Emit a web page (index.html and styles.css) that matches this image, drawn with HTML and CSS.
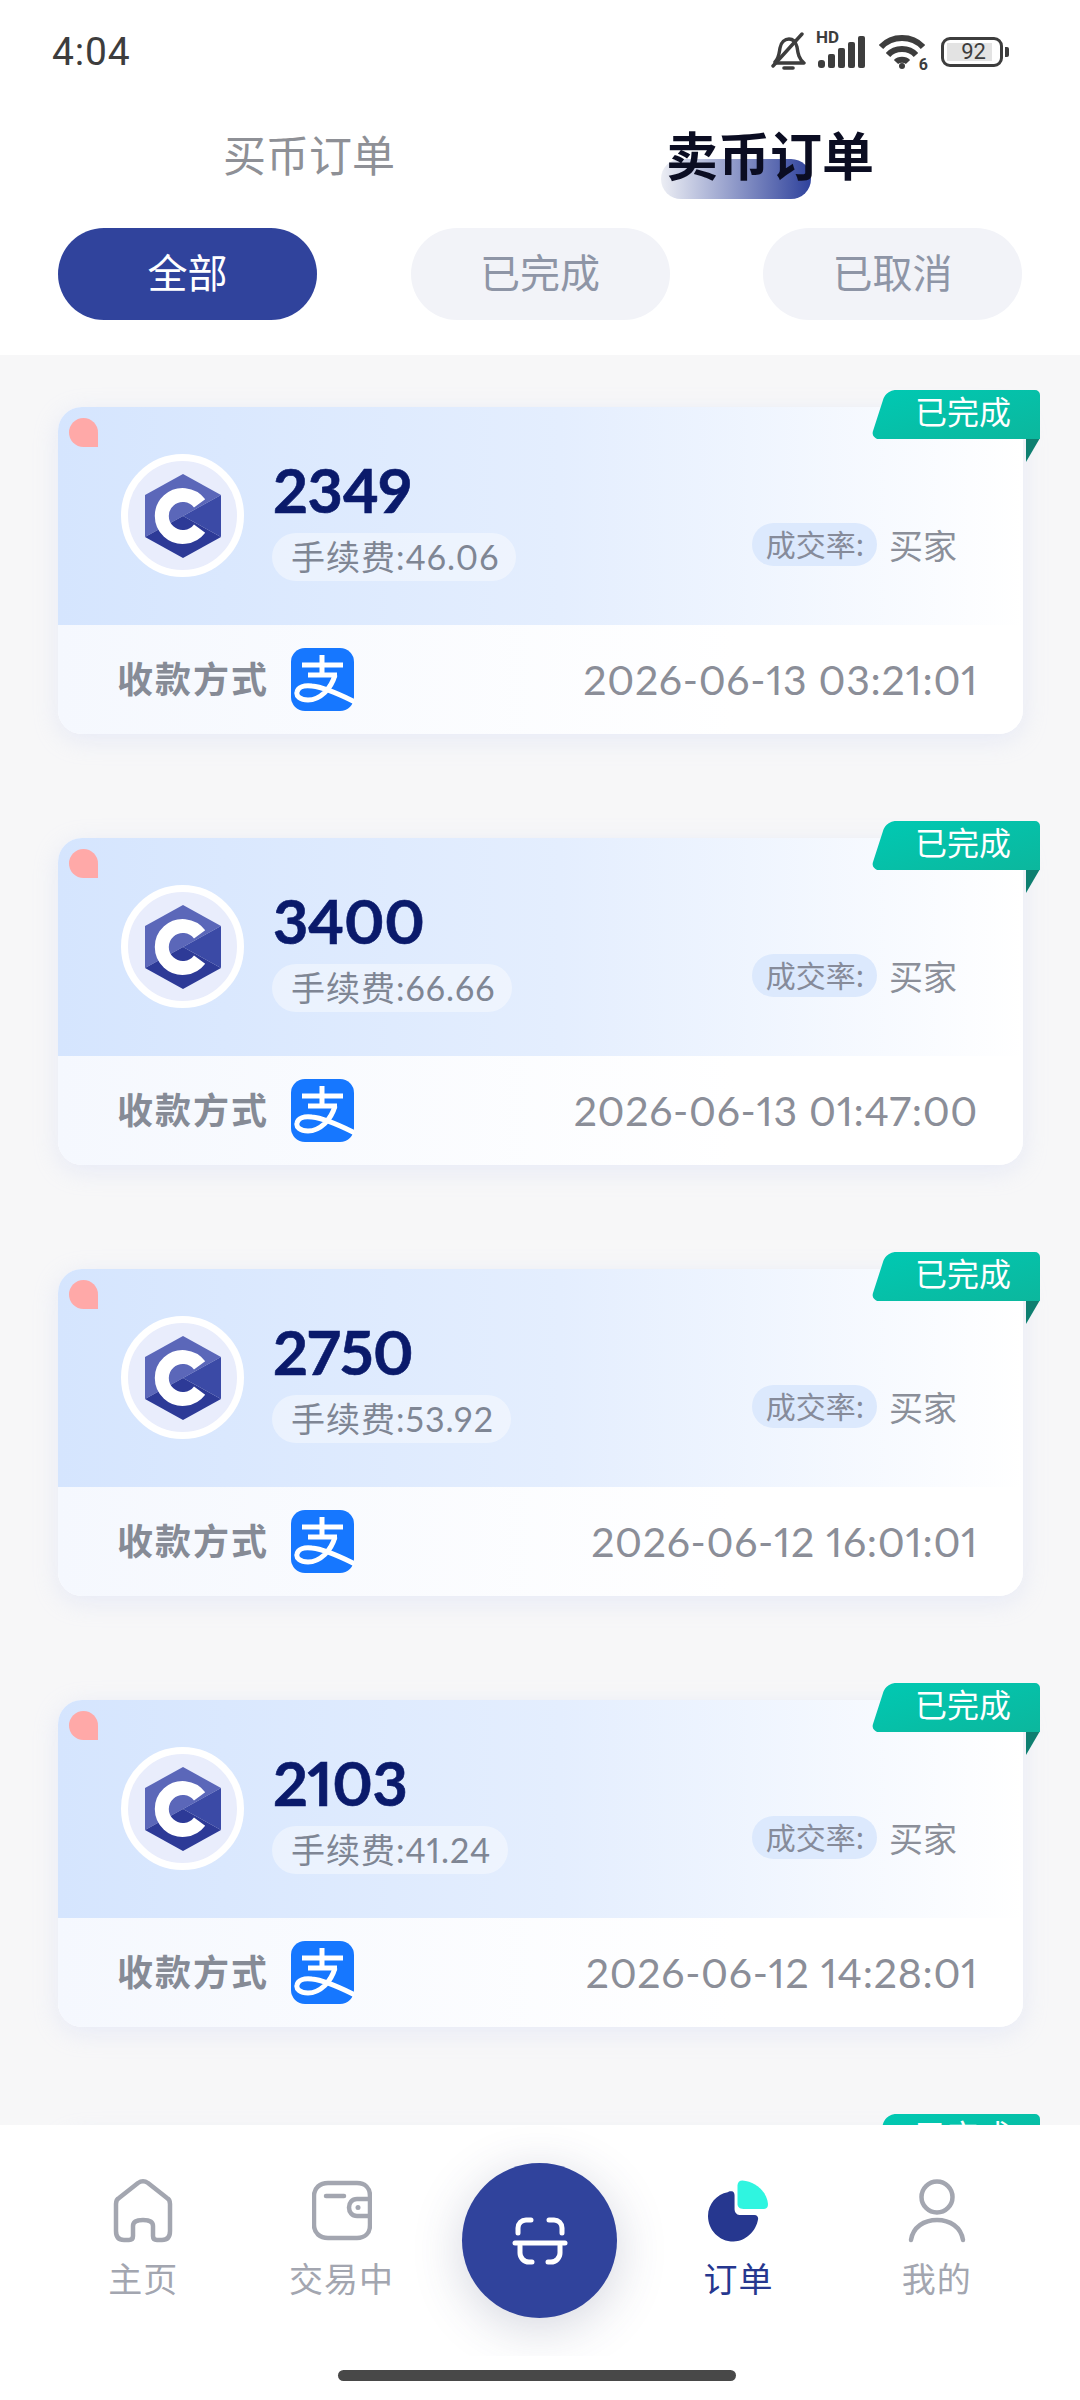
FILE: index.html
```html
<!DOCTYPE html>
<html lang="zh-CN">
<head>
    <meta charset="UTF-8">
    <meta name="viewport" content="width=device-width, initial-scale=1.0">
    <title>卖币订单</title>
    <link rel="stylesheet" href="styles.css">
</head>
<body>
    <svg class="defs" width="0" height="0">
        <defs>
            <linearGradient id="tagFill" x1="0" y1="0" x2="1" y2="1">
                <stop offset="0" stop-color="#00c9b3"/>
                <stop offset="1" stop-color="#0cb79d"/>
            </linearGradient>
            <symbol id="coin" viewBox="0 0 76 84">
                <polygon points="38,0 76,21 38,42 0,63 0,21" fill="#5b67b9"/>
                <polygon points="76,21 76,63 38,42" fill="#3b4aa6"/>
                <polygon points="0,63 38,42 76,63 38,84" fill="#2d3a97"/>
                <path d="M54.6 29.4A21 21 0 1 0 54.6 54.6" fill="none" stroke="#fff" stroke-width="14"/>
            </symbol>
            <symbol id="alipay" viewBox="0 0 63 63">
                <rect width="63" height="63" rx="14" fill="#1677ff"/>
                <path d="M11 17H52M31 7V26M17 27H46" fill="none" stroke="#fff" stroke-width="5"/>
                <path d="M44 27C40 41 29 52 17 52C9 52 5 48 6 44C7 39 13 37 21 38C33 39 48 46 64 54" fill="none" stroke="#fff" stroke-width="5"/>
            </symbol>
            <symbol id="ribbon" viewBox="0 0 168 72">
                <polygon points="154,48 168,48 154,72" fill="#0e7f70"/>
                <path d="M26 0H163a5 5 0 0 1 5 5V49H7a6 6 0 0 1-6-8L11 10a14 14 0 0 1 15-10z" fill="url(#tagFill)"/>
            </symbol>
        </defs>
    </svg>

    <div class="page">
        <header class="top">
            <div class="status">
                <span class="time">4:04</span>
                <div class="status-icons">
                    <svg class="ic-bell" viewBox="0 0 36 40" fill="none" stroke="#3d3d3d" stroke-width="3.4" stroke-linecap="round" stroke-linejoin="round">
                        <path d="M5 30C9 26 9 22 10 16C11 10 15 7 19 7C24 7 26 11 27 15C28 22 29 27 34 31L5 31"/>
                        <path d="M3 34L32 2"/>
                        <path d="M14 36H23" stroke-width="3.6"/>
                    </svg>
                    <div class="signal">
                        <span class="hd">HD</span>
                        <svg viewBox="0 0 47 32" fill="#3d3d3d">
                            <rect x="0" y="24" width="7" height="8" rx="3"/>
                            <rect x="10" y="18" width="7" height="14" rx="2"/>
                            <rect x="20" y="12" width="7" height="20" rx="2"/>
                            <rect x="30" y="6" width="7" height="26" rx="2"/>
                            <rect x="40" y="0" width="7" height="32" rx="2"/>
                        </svg>
                    </div>
                    <div class="wifi">
                        <svg viewBox="0 0 46 36" fill="none" stroke="#3d3d3d" stroke-width="6">
                            <path d="M2 13C13 1 33 1 44 13"/>
                            <path d="M9 21C16 13 30 13 37 21"/>
                            <path d="M17 28C20 25 26 25 29 28"/>
                            <circle cx="23" cy="32" r="3" fill="#3d3d3d" stroke="none"/>
                        </svg>
                        <span class="wifi-six">6</span>
                    </div>
                    <div class="battery">
                        <div class="battery-body"><span class="battery-level">92</span></div>
                        <span class="battery-nub"></span>
                    </div>
                </div>
            </div>
            <div class="tabs">
                <div class="tab">买币订单</div>
                <div class="tab tab-active"><span class="tab-mark"></span><span class="tab-text">卖币订单</span></div>
            </div>
            <div class="filters">
                <div class="filter filter-on">全部</div>
                <div class="filter">已完成</div>
                <div class="filter">已取消</div>
            </div>
        </header>

        <main class="list">
            <div class="card">
                <div class="tag"><svg class="tag-bg"><use href="#ribbon"/></svg><span class="tag-text">已完成</span></div>
                <div class="card-head">
                    <span class="dot"></span>
                    <div class="coin"><svg class="coin-mark"><use href="#coin"/></svg></div>
                    <div class="info">
                        <div class="amount">2349</div>
                        <div class="fee">手续费:46.06</div>
                    </div>
                    <div class="rate"><span class="rate-label">成交率:</span><span class="rate-value">买家</span></div>
                </div>
                <div class="card-foot">
                    <span class="pay-label">收款方式</span>
                    <svg class="pay-icon"><use href="#alipay"/></svg>
                    <span class="date">2026-06-13 03:21:01</span>
                </div>
            </div>

            <div class="card">
                <div class="tag"><svg class="tag-bg"><use href="#ribbon"/></svg><span class="tag-text">已完成</span></div>
                <div class="card-head">
                    <span class="dot"></span>
                    <div class="coin"><svg class="coin-mark"><use href="#coin"/></svg></div>
                    <div class="info">
                        <div class="amount">3400</div>
                        <div class="fee">手续费:66.66</div>
                    </div>
                    <div class="rate"><span class="rate-label">成交率:</span><span class="rate-value">买家</span></div>
                </div>
                <div class="card-foot">
                    <span class="pay-label">收款方式</span>
                    <svg class="pay-icon"><use href="#alipay"/></svg>
                    <span class="date">2026-06-13 01:47:00</span>
                </div>
            </div>

            <div class="card">
                <div class="tag"><svg class="tag-bg"><use href="#ribbon"/></svg><span class="tag-text">已完成</span></div>
                <div class="card-head">
                    <span class="dot"></span>
                    <div class="coin"><svg class="coin-mark"><use href="#coin"/></svg></div>
                    <div class="info">
                        <div class="amount">2750</div>
                        <div class="fee">手续费:53.92</div>
                    </div>
                    <div class="rate"><span class="rate-label">成交率:</span><span class="rate-value">买家</span></div>
                </div>
                <div class="card-foot">
                    <span class="pay-label">收款方式</span>
                    <svg class="pay-icon"><use href="#alipay"/></svg>
                    <span class="date">2026-06-12 16:01:01</span>
                </div>
            </div>

            <div class="card">
                <div class="tag"><svg class="tag-bg"><use href="#ribbon"/></svg><span class="tag-text">已完成</span></div>
                <div class="card-head">
                    <span class="dot"></span>
                    <div class="coin"><svg class="coin-mark"><use href="#coin"/></svg></div>
                    <div class="info">
                        <div class="amount">2103</div>
                        <div class="fee">手续费:41.24</div>
                    </div>
                    <div class="rate"><span class="rate-label">成交率:</span><span class="rate-value">买家</span></div>
                </div>
                <div class="card-foot">
                    <span class="pay-label">收款方式</span>
                    <svg class="pay-icon"><use href="#alipay"/></svg>
                    <span class="date">2026-06-12 14:28:01</span>
                </div>
            </div>

            <div class="card">
                <div class="tag"><svg class="tag-bg"><use href="#ribbon"/></svg><span class="tag-text">已完成</span></div>
            </div>
        </main>

        <footer class="bottom">
            <nav class="nav">
                <div class="nav-item">
                    <svg class="nav-icon" viewBox="0 0 60 64" fill="none" stroke="#a3a6b0" stroke-width="4.5" stroke-linejoin="round">
                        <path d="M3 25C3 22 4 20 6 19L25 4C28 2 32 2 35 4L54 19C56 20 57 22 57 25V52C57 58 54 61 49 61H44C41 61 40 59 40 57V47C40 43 36 41 30 41C24 41 20 43 20 47V57C20 59 19 61 16 61H11C6 61 3 58 3 52Z"/>
                    </svg>
                    <span>主页</span>
                </div>
                <div class="nav-item">
                    <svg class="nav-icon" viewBox="0 0 60 64" fill="none" stroke="#a3a6b0" stroke-width="4.5" stroke-linecap="round">
                        <path d="M58 20V17C58 9 53 4 45 4H16C8 4 2 9 2 17V46C2 54 8 59 16 59H45C53 59 58 54 58 46V37"/>
                        <path d="M14 17H32"/>
                        <path d="M58 20H45C40 20 37 24 37 28.500C37 33 40 37 45 37H58Z"/>
                        <circle cx="46" cy="28.500" r="2.500" fill="#a3a6b0" stroke="none"/>
                    </svg>
                    <span>交易中</span>
                </div>
                <div class="nav-item nav-gap">
                    <div class="scan">
                        <svg viewBox="0 0 100 100" fill="none" stroke="#fff" stroke-width="5" stroke-linecap="round">
                            <path d="M28 42V37a8 8 0 0 1 8-8H41"/>
                            <path d="M59 29H64a8 8 0 0 1 8 8V42"/>
                            <path d="M25 52H75"/>
                            <path d="M30 55V62a9 9 0 0 0 9 9H42"/>
                            <path d="M70 55V62a9 9 0 0 1-9 9H58"/>
                        </svg>
                    </div>
                </div>
                <div class="nav-item nav-on">
                    <svg class="nav-icon" viewBox="0 0 61 62">
                        <path d="M24 11C26 11 27 13 27 15V29C27 32 29 35 32 35H47C50 35 51 37 51 39C49 52 38 62 26 62C11 62 0 50 0 36C0 24 9 14 20 12C21 11 23 11 24 11Z" fill="#26378f"/>
                        <path d="M35 0C49 1 60 12 61 24C61 27 60 29 57 29H36C32 29 30 27 30 24V5C30 2 32 0 35 0Z" fill="#2ff5e0"/>
                    </svg>
                    <span>订单</span>
                </div>
                <div class="nav-item">
                    <svg class="nav-icon" viewBox="0 0 60 64" fill="none" stroke="#a3a6b0" stroke-width="4.500" stroke-linecap="round">
                        <circle cx="30" cy="18" r="15.500"/>
                        <path d="M4 61C6 48 17 41 30 41C43 41 54 48 56 61"/>
                    </svg>
                    <span>我的</span>
                </div>
            </nav>
            <div class="home-strip"><span class="home-bar"></span></div>
        </footer>
    </div>
</body>
</html>
```

FILE: styles.css
```css
* { box-sizing: border-box; }
html, body { margin: 0; padding: 0; background: #fff; }
body { font-family: "Noto Sans CJK SC", "Noto Sans", sans-serif; }
.defs { position: absolute; }
.page { width: 1080px; height: 2400px; display: flex; flex-direction: column; overflow: hidden; background: #f7f7f8; }

/* header */
.top { height: 355px; flex-shrink: 0; background: #fff; }
.status { height: 104px; padding: 0 71px 0 52px; display: flex; justify-content: space-between; align-items: center; }
.time { font-family: Roboto, sans-serif; font-size: 39px; color: #3d3d3d; letter-spacing: 0.8px; }
.status-icons { display: flex; align-items: center; }
.ic-bell { width: 36px; height: 40px; }
.signal { position: relative; width: 47px; height: 32px; margin-left: 12px; }
.signal svg { display: block; width: 47px; height: 32px; }
.hd { position: absolute; left: -2px; top: -6px; font-family: Roboto, sans-serif; font-size: 17px; font-weight: 700; line-height: 15px; color: #3d3d3d; background: #fff; }
.wifi { position: relative; width: 46px; height: 36px; margin-left: 14px; }
.wifi svg { display: block; width: 46px; height: 36px; }
.wifi-six { position: absolute; right: -3px; bottom: -3px; font-family: Roboto, sans-serif; font-size: 16px; font-weight: 700; line-height: 16px; color: #3d3d3d; background: #fff; padding-left: 1px; }
.battery { display: flex; align-items: center; margin-left: 16px; }
.battery-body { width: 62px; height: 30px; border: 3px solid #3d3d3d; border-radius: 9px; padding: 3px; display: flex; }
.battery-level { width: 45px; background: #e3e3e3; font-family: Roboto, sans-serif; font-size: 22px; line-height: 18px; color: #3d3d3d; text-align: center; padding-left: 8px; }
.battery-nub { width: 4px; height: 10px; margin-left: 2px; background: #3d3d3d; border-radius: 0 2px 2px 0; }

.tabs { display: flex; height: 106px; }
.tab { width: 540px; height: 104px; padding: 0 0 6px 78px; display: flex; align-items: center; justify-content: center; font-size: 43px; color: #8e9096; position: relative; }
.tab-active { font-size: 52px; font-weight: 700; color: #0b0d22; padding: 0 80px 6px 0; }
.tab-mark { position: absolute; left: 121px; top: 55px; width: 150px; height: 40px; border-radius: 20px; background: linear-gradient(90deg, #eceef4 0%, #2f429c 100%); }
.tab-text { position: relative; }

.filters { display: flex; justify-content: space-between; padding: 18px 58px 0 58px; }
.filter { width: 259px; height: 92px; padding-bottom: 6px; border-radius: 46px; background: #f2f3f8; color: #8e95a6; font-size: 40px; display: flex; align-items: center; justify-content: center; }
.filter-on { background: #30439c; color: #fff; }

/* order cards */
.list { flex: 1; min-height: 0; padding: 52px 57px 0 58px; overflow: hidden; }
.card { position: relative; height: 327px; margin-bottom: 104px; border-radius: 24px; background: #fff; box-shadow: 0 6px 24px rgba(190, 200, 240, 0.28); }
.card-head { position: relative; height: 218px; padding: 47px 66px 0 63px; display: flex; border-radius: 24px 24px 0 0; background: linear-gradient(90deg, #d5e5fe 0%, #e4eefe 52%, #fff 100%); }
.dot { position: absolute; left: 11px; top: 11px; width: 29px; height: 29px; border-radius: 50% 50% 0 50%; background: #ffa9a8; }
.coin { width: 123px; height: 123px; flex-shrink: 0; border: 7px solid #fff; border-radius: 50%; background: #e9edfc; display: flex; align-items: center; justify-content: center; }
.coin-mark { width: 76px; height: 84px; }
.info { margin-left: 28px; }
.amount { font-family: Lato, sans-serif; font-weight: 700; font-size: 61px; line-height: 72px; letter-spacing: -0.4px; color: #0a1a6b; margin-left: 1px; font-variant-numeric: proportional-nums; -webkit-text-stroke: 0.6px #0a1a6b; }
.fee { display: inline-block; height: 48px; line-height: 48px; padding: 0 17px 0 19px; border-radius: 24px; background: rgba(255, 255, 255, 0.42); font-size: 34px; letter-spacing: 1px; color: #7f8694; margin-top: 7px; font-family: Lato, "Noto Sans CJK SC", sans-serif; font-variant-numeric: proportional-nums; }
.rate { margin-left: auto; margin-top: 69px; height: 43px; display: flex; align-items: center; }
.rate-label { height: 43px; line-height: 40px; padding: 0 13px 0 14px; border-radius: 22px; background: #dce9fd; font-size: 30px; color: #868b9a; }
.rate-value { margin-left: 12px; font-size: 34px; color: #8b8f99; }
.card-foot { height: 109px; padding: 0 45px 0 59px; display: flex; align-items: center; border-radius: 0 0 24px 24px; background: linear-gradient(90deg, #f5f8fe 0%, #fff 70%); }
.pay-label { font-size: 36px; font-weight: 700; color: #868b96; letter-spacing: 2px; position: relative; top: -3px; }
.pay-icon { width: 63px; height: 63px; margin-left: 22px; }
.date { margin-left: auto; font-family: Lato, sans-serif; font-size: 41px; letter-spacing: 0.7px; color: #8b8e98; font-variant-numeric: proportional-nums; }
.tag { position: absolute; right: -17px; top: -17px; width: 168px; height: 72px; z-index: 2; }
.tag-bg { position: absolute; left: 0; top: 0; width: 168px; height: 72px; }
.tag-text { position: absolute; right: 29px; top: -3px; line-height: 47px; font-size: 32px; color: #fff; }

/* bottom nav */
.bottom { flex-shrink: 0; height: 275px; background: #fff; position: relative; z-index: 3; }
.nav { height: 231px; padding: 0 44px; display: flex; overflow: hidden; }
.nav-item { width: 198.500px; padding-top: 54px; display: flex; flex-direction: column; align-items: center; font-size: 34px; letter-spacing: 1px; line-height: 40px; color: #a3a6b0; }
.nav-on { color: #26378f; }
.nav-icon { width: 60px; height: 64px; margin-bottom: 15px; }
.nav-gap { padding-top: 38px; }
.scan { width: 155px; height: 155px; margin-right: 1px; flex-shrink: 0; border-radius: 50%; background: #30439c; box-shadow: 0 10px 50px rgba(60, 70, 110, 0.22); display: flex; align-items: center; justify-content: center; }
.scan svg { width: 100px; height: 100px; }
.home-strip { height: 44px; padding: 14px 6px 0 0; display: flex; justify-content: center; }
.home-bar { width: 398px; height: 11px; border-radius: 6px; background: #484848; }
```
